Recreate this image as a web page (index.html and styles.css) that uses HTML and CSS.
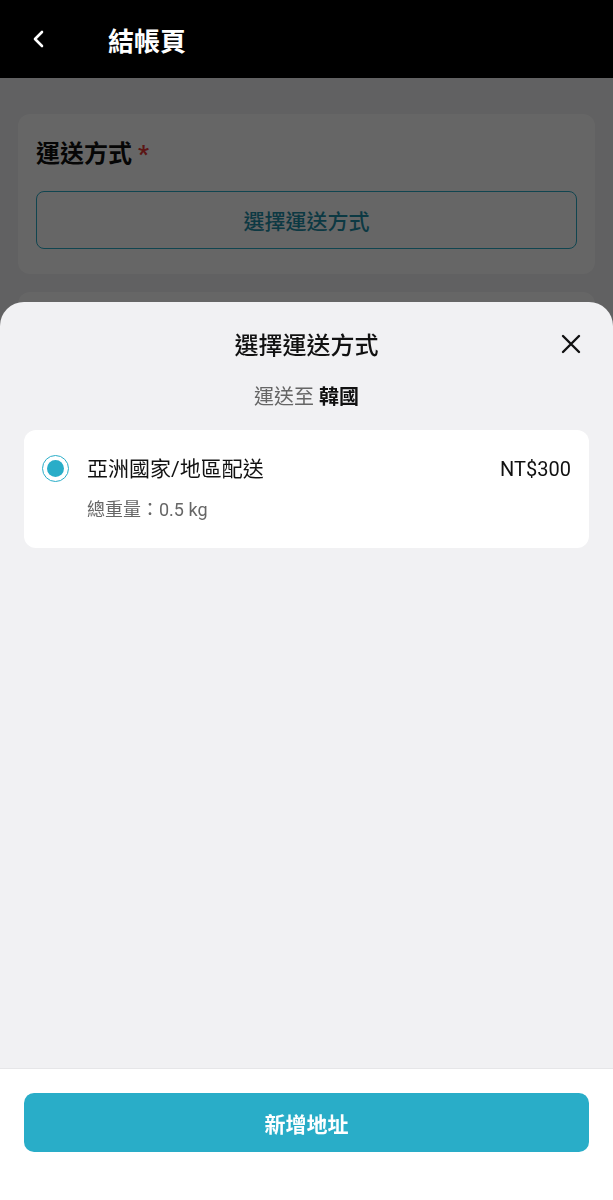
FILE: index.html
```html
<!DOCTYPE html>
<html lang="zh-Hant">
<head>
  <meta charset="UTF-8" />
  <meta name="viewport" content="width=device-width, initial-scale=1.0">
  <title>結帳頁</title>
  <link rel="stylesheet" href="styles.css">
</head>
<body>

  <!-- 頂部導覽列 -->
  <header class="topbar">
    <svg class="back-icon" width="16" height="20" viewBox="0 0 16 20">
      <path d="M11 3 L4 10 L11 17" fill="none" stroke="#fff" stroke-width="2.6" stroke-linecap="round" stroke-linejoin="round"/>
    </svg>
    <h1 class="topbar-title">結帳頁</h1>
  </header>

  <!-- 結帳內容 -->
  <main class="page">
    <section class="card">
      <div class="card-label">運送方式 <span class="required">*</span></div>
      <button class="outline-button">選擇運送方式</button>
    </section>
    <section class="card card-next"></section>
  </main>

  <!-- 遮罩與底部選單 -->
  <div class="overlay"></div>

  <div class="sheet">
    <div class="sheet-body">
      <div class="sheet-head">
        <h2 class="sheet-title">選擇運送方式</h2>
        <svg class="close-icon" width="22" height="22" viewBox="0 0 22 22">
          <path d="M3 3 L19 19 M19 3 L3 19" stroke="#111" stroke-width="2.4" stroke-linecap="round"/>
        </svg>
      </div>
      <p class="ship-to">運送至 <strong>韓國</strong></p>

      <label class="option">
        <span class="radio"><span class="radio-dot"></span></span>
        <span class="option-info">
          <span class="option-row">
            <span class="option-name">亞洲國家/地區配送</span>
            <span class="option-price">NT$300</span>
          </span>
          <span class="option-weight">總重量：0.5 kg</span>
        </span>
      </label>
    </div>

    <footer class="sheet-footer">
      <button class="primary-button">新增地址</button>
    </footer>
  </div>

</body>
</html>
```

FILE: styles.css
```css
:root {
  --teal: #29adc8;
  --sheet-bg: #f1f1f3;
  --text: #111;
  --muted: #666;
}
html, body {
  margin: 0;
  padding: 0;
  width: 613px;
  height: 1200px;
  overflow: hidden;
  font-family: Roboto, "Noto Sans CJK TC", sans-serif;
  color: var(--text);
  background: #f2f2f4;
}
button {
  font-family: inherit;
  cursor: pointer;
}

/* 頂部導覽列 */
.topbar {
  height: 78px;
  background: #000;
  display: flex;
  align-items: center;
  padding-left: 31px;
  box-sizing: border-box;
}
.topbar-title {
  margin: 0 0 0 61px;
  color: #fff;
  font-size: 26px;
  font-weight: 700;
}

/* 結帳內容 */
.page {
  padding: 36px 18px;
}
.card {
  background: #fff;
  border-radius: 12px;
  padding: 24px 18px 25px;
}
.card-label {
  font-size: 24px;
  font-weight: 700;
  line-height: 32px;
}
.required {
  color: #e53935;
}
.outline-button {
  display: block;
  width: 100%;
  height: 58px;
  margin-top: 21px;
  background: #fff;
  border: 1px solid var(--teal);
  border-radius: 8px;
  color: #1f8ea8;
  font-size: 21px;
  font-weight: 500;
}
.card-next {
  margin-top: 18px;
  height: 200px;
  padding: 0;
}

/* 遮罩（不蓋住導覽列） */
.overlay {
  position: fixed;
  left: 0;
  right: 0;
  top: 78px;
  bottom: 0;
  background: rgba(0, 0, 0, 0.6);
}

/* 底部選單 */
.sheet {
  position: fixed;
  left: 0;
  right: 0;
  top: 302px;
  bottom: 0;
  background: var(--sheet-bg);
  border-radius: 24px 24px 0 0;
  display: flex;
  flex-direction: column;
  overflow: hidden;
}
.sheet-body {
  flex: 1;
  padding: 0 24px;
}
.sheet-head {
  height: 82px;
  display: flex;
  align-items: center;
  justify-content: center;
  position: relative;
}
.sheet-title {
  margin: 0;
  font-size: 24px;
  font-weight: 500;
}
.close-icon {
  position: absolute;
  right: 7px;
  top: 31px;
}
.ship-to {
  margin: 0;
  text-align: center;
  font-size: 20px;
  line-height: 26px;
  color: var(--muted);
}
.ship-to strong {
  color: var(--text);
  font-weight: 700;
}

.option {
  display: flex;
  align-items: flex-start;
  margin-top: 20px;
  background: #fff;
  border-radius: 12px;
  padding: 24px 18px 26px 18px;
}
.radio {
  width: 27px;
  height: 27px;
  margin-top: 1px;
  border: 1.5px solid var(--teal);
  border-radius: 50%;
  box-sizing: border-box;
  display: flex;
  align-items: center;
  justify-content: center;
  flex-shrink: 0;
}
.radio-dot {
  width: 17px;
  height: 17px;
  border-radius: 50%;
  background: var(--teal);
}
.option-info {
  flex: 1;
  margin-left: 18px;
  display: flex;
  flex-direction: column;
}
.option-row {
  display: flex;
  justify-content: space-between;
  align-items: center;
  font-size: 21px;
  line-height: 30px;
}
.option-price {
  font-size: 20px;
}
.option-weight {
  margin-top: 14px;
  font-size: 18px;
  line-height: 24px;
  color: var(--muted);
}

.sheet-footer {
  height: 132px;
  background: #fff;
  border-top: 1px solid #e6e6e8;
  box-sizing: border-box;
  padding: 24px 24px 0;
}
.primary-button {
  width: 100%;
  height: 59px;
  border: none;
  border-radius: 10px;
  background: var(--teal);
  color: #fff;
  font-size: 21px;
  font-weight: 700;
}
```
